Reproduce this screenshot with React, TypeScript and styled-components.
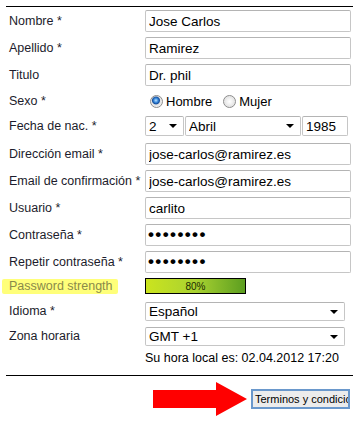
import React from "react";
import styled, { createGlobalStyle } from "styled-components";

const GlobalStyle = createGlobalStyle`
  body {
    margin: 0;
    background: #ffffff;
    font-family: "Liberation Sans", Arial, sans-serif;
  }
`;

const Page = styled.div`
  width: 364px;
  height: 421px;
  padding: 6px 11px 0 6px;
  box-sizing: border-box;
  overflow: hidden;
`;

const Rule = styled.div<{ $top?: number }>`
  height: 1px;
  background: #000;
  margin-top: ${(p) => p.$top ?? 0}px;
  width: 347px;
`;

const Form = styled.form`
  display: flex;
  flex-direction: column;
  margin: 0;
  padding-top: 3px;
`;

const Row = styled.div<{ $h: number; $gap?: number }>`
  display: flex;
  align-items: center;
  height: ${(p) => p.$h}px;
  margin-top: ${(p) => p.$gap ?? 0}px;
`;

const Label = styled.label<{ $hl?: boolean }>`
  width: 139px;
  flex: none;
  box-sizing: border-box;
  padding-left: 3px;
  font-size: 12.5px;
  line-height: 15px;
  white-space: nowrap;
  color: ${(p) => (p.$hl ? "#8a8a4a" : "#1c1c2c")};
  position: relative;
  &::before {
    content: "";
    display: ${(p) => (p.$hl ? "block" : "none")};
    position: absolute;
    left: -4px;
    top: 0px;
    width: 116px;
    height: 15px;
    background: #ffff7a;
    border-radius: 2px;
  }
`;

const LabelText = styled.span`
  position: relative;
`;

const TextInput = styled.input<{ $w?: number; $h?: number }>`
  width: ${(p) => p.$w ?? 206}px;
  height: ${(p) => p.$h ?? 22}px;
  box-sizing: border-box;
  border: 1px solid #c6c6c6;
  border-top-color: #b4b4b4;
  border-radius: 2px;
  padding: 0 3px;
  font-family: "Liberation Sans", Arial, sans-serif;
  font-size: 13.5px;
  color: #000;
  background: #fff;
  outline: none;
  flex: none;
`;

const Password = styled(TextInput)`
  font-size: 17px;
  letter-spacing: 1.4px;
  font-weight: bold;
  padding-left: 2px;
`;

const SelectWrap = styled.div<{ $w: number; $h?: number }>`
  position: relative;
  width: ${(p) => p.$w}px;
  height: ${(p) => p.$h ?? 19}px;
  flex: none;
`;

const Select = styled.select`
  appearance: none;
  width: 100%;
  height: 100%;
  box-sizing: border-box;
  border: 1px solid #c6c6c6;
  border-top-color: #b4b4b4;
  border-radius: 2px;
  padding: 0 3px;
  font-family: "Liberation Sans", Arial, sans-serif;
  font-size: 13.5px;
  color: #000;
  background: #fff;
  outline: none;
`;

const Caret = styled.span`
  position: absolute;
  right: 7px;
  top: 8px;
  width: 0;
  height: 0;
  border-left: 4px solid transparent;
  border-right: 4px solid transparent;
  border-top: 4px solid #000;
  pointer-events: none;
`;

const DateGroup = styled.div`
  display: flex;
  gap: 1px;
  align-items: center;
`;

const RadioGroup = styled.div`
  display: flex;
  align-items: center;
  padding-left: 5px;
  font-size: 13px;
  color: #000;
`;

const RadioOption = styled.label`
  display: flex;
  align-items: center;
  gap: 3px;
  margin-right: 11px;
`;

const RadioDot = styled.span<{ $on?: boolean }>`
  width: 11px;
  height: 11px;
  border-radius: 50%;
  border: 1px solid #8c8c8c;
  background: ${(p) =>
    p.$on
      ? "radial-gradient(circle at 45% 40%, #bfe3ff 0, #3f8fe0 2px, #134f9e 3.5px, #e4e4e4 4.5px, #f4f4f4 100%)"
      : "radial-gradient(circle at 50% 50%, #ffffff 0, #f0f0f0 3px, #d2d2d2 100%)"};
  box-shadow: inset 0 0 1px #fff;
`;

const Strength = styled.div`
  width: 101px;
  height: 16px;
  box-sizing: border-box;
  border: 1px solid #000;
  background: linear-gradient(90deg, #cbe41e 0%, #a9d231 50%, #5c9e20 100%);
  font-size: 10px;
  color: #1a2a00;
  display: flex;
  justify-content: center;
  align-items: center;
`;

const LocalTime = styled.div`
  margin-top: 3px;
  height: 18px;
  padding-left: 139px;
  font-size: 12.5px;
  white-space: nowrap;
  color: #000;
  display: flex;
  align-items: center;
`;

const Footer = styled.div`
  display: flex;
  justify-content: flex-end;
  align-items: center;
  gap: 4px;
  margin-top: 6px;
  padding-right: 3px;
  width: 347px;
  box-sizing: border-box;
`;

const TermsButton = styled.button`
  width: 99px;
  height: 20px;
  box-sizing: border-box;
  border: 2px solid #6a98cc;
  background: #ececec;
  padding: 0 0 0 2px;
  font-family: "Liberation Sans", Arial, sans-serif;
  font-size: 11px;
  color: #000;
  white-space: nowrap;
  overflow: hidden;
  text-align: left;
`;

const Arrow = () => (
  <svg width="94" height="34" viewBox="0 0 94 34">
    <polygon points="0,8 63,8 63,0 94,17 63,34 63,26 0,26" fill="#ff0000" />
  </svg>
);

const fields: { label: string; value: string }[] = [
  { label: "Nombre *", value: "Jose Carlos" },
  { label: "Apellido *", value: "Ramirez" },
  { label: "Titulo", value: "Dr. phil" },
];

const App = () => (
  <Page>
    <GlobalStyle />
    <Rule />
    <Form>
      {fields.map((f, i) => (
        <Row key={f.label} $h={22} $gap={i === 0 ? 0 : 5}>
          <Label>{f.label}</Label>
          <TextInput defaultValue={f.value} />
        </Row>
      ))}
      <Row $h={20} $gap={5}>
        <Label>Sexo *</Label>
        <RadioGroup>
          <RadioOption>
            <RadioDot $on />
            Hombre
          </RadioOption>
          <RadioOption>
            <RadioDot />
            Mujer
          </RadioOption>
        </RadioGroup>
      </Row>
      <Row $h={20} $gap={5}>
        <Label>Fecha de nac. *</Label>
        <DateGroup>
          <SelectWrap $w={39} $h={20}>
            <Select defaultValue="2">
              <option>2</option>
            </Select>
            <Caret />
          </SelectWrap>
          <SelectWrap $w={116} $h={20}>
            <Select defaultValue="Abril">
              <option>Abril</option>
            </Select>
            <Caret />
          </SelectWrap>
          <TextInput $w={46} $h={20} defaultValue="1985" />
        </DateGroup>
      </Row>
      <Row $h={22} $gap={7}>
        <Label>Dirección email *</Label>
        <TextInput defaultValue="jose-carlos@ramirez.es" />
      </Row>
      <Row $h={22} $gap={5}>
        <Label>Email de confirmación *</Label>
        <TextInput defaultValue="jose-carlos@ramirez.es" />
      </Row>
      <Row $h={22} $gap={5}>
        <Label>Usuario *</Label>
        <TextInput defaultValue="carlito" />
      </Row>
      <Row $h={22} $gap={5}>
        <Label>Contraseña *</Label>
        <Password type="password" defaultValue="carlito1" />
      </Row>
      <Row $h={22} $gap={5}>
        <Label>Repetir contraseña *</Label>
        <Password type="password" defaultValue="carlito1" />
      </Row>
      <Row $h={16} $gap={5}>
        <Label $hl>
          <LabelText>Password strength</LabelText>
        </Label>
        <Strength>80%</Strength>
      </Row>
      <Row $h={19} $gap={8}>
        <Label>Idioma *</Label>
        <SelectWrap $w={200}>
          <Select defaultValue="Español">
            <option>Español</option>
          </Select>
          <Caret />
        </SelectWrap>
      </Row>
      <Row $h={19} $gap={6}>
        <Label>Zona horaria</Label>
        <SelectWrap $w={200}>
          <Select defaultValue="GMT +1">
            <option>GMT +1</option>
          </Select>
          <Caret />
        </SelectWrap>
      </Row>
      <LocalTime>Su hora local es: 02.04.2012 17:20</LocalTime>
    </Form>
    <Rule $top={8} />
    <Footer>
      <Arrow />
      <TermsButton type="button">Terminos y condiciones</TermsButton>
    </Footer>
  </Page>
);

export default App;
